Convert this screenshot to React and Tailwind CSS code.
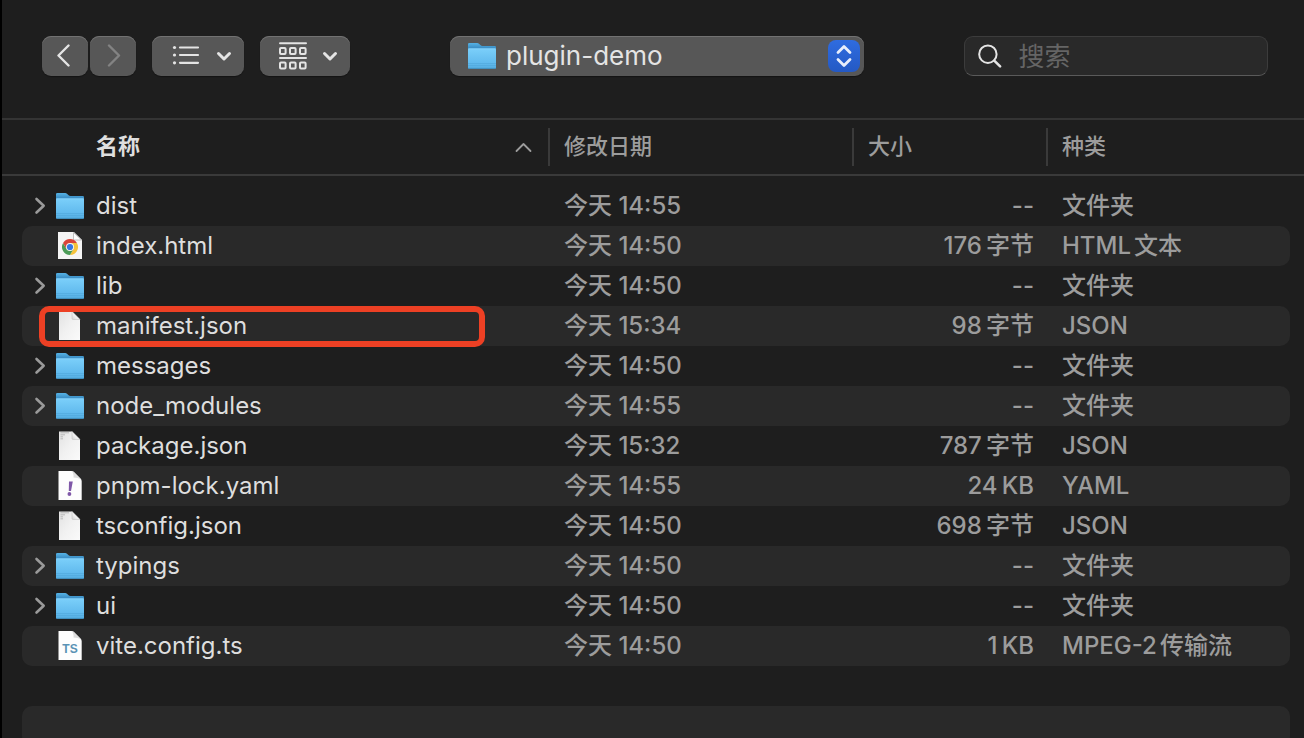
import { useState } from "react";

const files = [
  { name: "dist", icon: "folder", date: "今天 14:55", size: "--", kind: "文件夹" },
  { name: "index.html", icon: "chrome", date: "今天 14:50", size: "176\u2009字节", kind: "HTML文本" },
  { name: "lib", icon: "folder", date: "今天 14:50", size: "--", kind: "文件夹" },
  { name: "manifest.json", icon: "doc", date: "今天 15:34", size: "98\u2009字节", kind: "JSON", marked: true },
  { name: "messages", icon: "folder", date: "今天 14:50", size: "--", kind: "文件夹" },
  { name: "node_modules", icon: "folder", date: "今天 14:55", size: "--", kind: "文件夹" },
  { name: "package.json", icon: "docText", date: "今天 15:32", size: "787\u2009字节", kind: "JSON" },
  { name: "pnpm-lock.yaml", icon: "yaml", date: "今天 14:55", size: "24\u2009KB", kind: "YAML" },
  { name: "tsconfig.json", icon: "docText", date: "今天 14:50", size: "698\u2009字节", kind: "JSON" },
  { name: "typings", icon: "folder", date: "今天 14:50", size: "--", kind: "文件夹" },
  { name: "ui", icon: "folder", date: "今天 14:50", size: "--", kind: "文件夹" },
  { name: "vite.config.ts", icon: "ts", date: "今天 14:50", size: "1\u2009KB", kind: "MPEG-2传输流" },
];

function Gradients() {
  return (
    <svg width="0" height="0" className="absolute" aria-hidden="true">
      <defs>
        <linearGradient id="folderBack" x1="0" y1="0" x2="0" y2="1">
          <stop offset="0" stopColor="#56b2e4" />
          <stop offset="0.25" stopColor="#3c8fc6" />
          <stop offset="1" stopColor="#3c8fc6" />
        </linearGradient>
        <linearGradient id="folderFront" x1="0" y1="0" x2="0" y2="1">
          <stop offset="0" stopColor="#7bcffa" />
          <stop offset="0.7" stopColor="#62bbee" />
          <stop offset="1" stopColor="#55aee2" />
        </linearGradient>
        <linearGradient id="paper" x1="0" y1="0" x2="1" y2="1">
          <stop offset="0" stopColor="#e2e2e2" />
          <stop offset="0.5" stopColor="#f1f1f1" />
          <stop offset="1" stopColor="#fafafa" />
        </linearGradient>
        <linearGradient id="fold" x1="1" y1="0" x2="0" y2="1">
          <stop offset="0.4" stopColor="#ffffff" />
          <stop offset="1" stopColor="#d2d2d2" />
        </linearGradient>
      </defs>
    </svg>
  );
}

function Folder() {
  return (
    <svg width="28" height="28" viewBox="0 0 28 28" aria-hidden="true">
      <path d="M0 2.2Q0 1 1.2 1H9.2Q10.2 1 11 1.7L12.6 3.2Q13.3 4 14.4 4H26.8Q28 4 28 5.2V20H0Z" fill="url(#folderBack)" />
      <path d="M0 7.2Q0 6.4 0.9 6.4H27.1Q28 6.4 28 7.2V25.6Q28 26.8 26.8 26.8H1.2Q0 26.8 0 25.6Z" fill="url(#folderFront)" />
      <path d="M0.4 6.9H27.6" stroke="#8ad6fb" strokeWidth="0.8" />
      <path d="M0 21.5H28M0 23.5H28" stroke="#4fa6da" strokeWidth="0.6" />
      <path d="M0.3 26.4H27.7" stroke="#3f8fc0" strokeWidth="0.9" />
    </svg>
  );
}

function Chrome() {
  return (
    <svg width="28" height="28" viewBox="0 0 28 28" aria-hidden="true">
      <path d="M2 0H18L26 8V27H2Z" fill="#f4f4f4" />
      <path d="M17.5 0.5V8H25.5Z" fill="#fdfdfd" stroke="#b4b4b4" strokeWidth="0.8" />
      <g transform="translate(0 -0.5)">
        <path d="M14 11.5H20.93A8 8 0 0 1 14 23.5L17.46 17.5Z" fill="#f5c33b" />
        <path d="M17.46 17.5L14 23.5A8 8 0 0 1 7.07 11.5L10.54 17.5Z" fill="#4b9b57" />
        <path d="M10.54 17.5L7.07 11.5A8 8 0 0 1 20.93 11.5H14Z" fill="#d8453a" />
        <circle cx="14" cy="15.5" r="4" fill="#f4f4f4" />
        <circle cx="14" cy="15.5" r="3.1" fill="#3577e4" />
      </g>
    </svg>
  );
}

function Doc({ lines }) {
  return (
    <svg width="28" height="30" viewBox="0 1 28 30" aria-hidden="true">
      <path d="M3 1.5H16L24 9.5V30H3Z" fill="url(#paper)" />
      {lines && <path d="M4.5 2.8H13M4.5 4.8H9M4.5 6.8H7M4.5 8.8H7" stroke="#b4b4b4" strokeWidth="0.9" />}
      <path d="M16 1.5V8.5Q16 9.5 17 9.5H24Z" fill="url(#fold)" stroke="#c4c4c4" strokeWidth="0.6" />
    </svg>
  );
}

function Labeled({ children }) {
  return (
    <svg width="28" height="30" viewBox="0 1 28 30" aria-hidden="true">
      <path d="M2.5 1H15.5Q17 1 18 2L25 9Q25.7 10 25.7 11.5V30H2.5Z" fill="#fdfdfd" />
      <path d="M15.5 1Q18 3 17.5 7.5Q22 7.5 25 9.5L17.5 1.8Z" fill="#dcdcdc" />
      {children}
    </svg>
  );
}

function FileIcon({ type }) {
  if (type === "folder") return <Folder />;
  if (type === "chrome") return <Chrome />;
  if (type === "doc") return <Doc />;
  if (type === "docText") return <Doc lines />;
  if (type === "yaml")
    return (
      <Labeled>
        <path d="M13 11.5H16.8L15 21H12.8Z" fill="#7f57a8" />
        <circle cx="13.4" cy="24" r="1.9" fill="#7f57a8" />
      </Labeled>
    );
  return (
    <Labeled>
      <text x="14" y="22.5" textAnchor="middle" fontSize="12" fontWeight="700" fill="#5a93b5" fontFamily="'Liberation Sans', sans-serif">
        TS
      </text>
    </Labeled>
  );
}

const toolButton =
  "flex h-10 items-center rounded-[9px] bg-[#575757] text-[#e4e4e4] shadow-[inset_0_1px_0_#727272,0_1px_1px_rgba(0,0,0,0.35)]";

function DownChevron() {
  return (
    <svg width="16" height="12" viewBox="0 0 16 12" fill="none" stroke="currentColor" strokeWidth="3" strokeLinecap="round" strokeLinejoin="round" aria-hidden="true">
      <path d="M2.5 3.5L8 9L13.5 3.5" />
    </svg>
  );
}

function Toolbar() {
  const [query, setQuery] = useState("");
  return (
    <header className="flex h-[118px] shrink-0 items-center justify-between gap-4 pr-9 pb-1.5 pl-10">
      <div className="flex gap-4">
        <div className="flex gap-0.5">
          <button type="button" aria-label="后退" className={`${toolButton} w-[46px] justify-center`}>
            <svg width="16" height="24" viewBox="0 0 16 24" fill="none" stroke="currentColor" strokeWidth="2.4" strokeLinecap="round" strokeLinejoin="round" aria-hidden="true">
              <path d="M11.5 1.5L1.5 11.5L11.5 21.5" />
            </svg>
          </button>
          <button type="button" aria-label="前进" className={`${toolButton} w-[46px] justify-center`}>
            <svg width="16" height="24" viewBox="0 0 16 24" fill="none" stroke="#838383" strokeWidth="2.4" strokeLinecap="round" strokeLinejoin="round" aria-hidden="true">
              <path d="M4 1.5L14 11.5L4 21.5" />
            </svg>
          </button>
        </div>
        <button type="button" aria-label="列表显示" className={`${toolButton} w-[92px] justify-between pr-3 pl-5`}>
          <svg width="28" height="22" viewBox="0 0 28 22" aria-hidden="true">
            <g fill="currentColor">
              <circle cx="2.5" cy="2.5" r="1.6" />
              <circle cx="2.5" cy="10" r="1.6" />
              <circle cx="2.5" cy="17.8" r="1.6" />
            </g>
            <path d="M8 2.5H26M8 10H26M8 17.8H26" stroke="currentColor" strokeWidth="2.2" strokeLinecap="round" />
          </svg>
          <DownChevron />
        </button>
        <button type="button" aria-label="分组方式" className={`${toolButton} w-[90px] justify-between pr-3 pl-[18px]`}>
          <svg width="30" height="30" viewBox="0 0 30 30" fill="none" stroke="currentColor" strokeWidth="2" strokeLinecap="round" aria-hidden="true">
            <path d="M2 2.2H28M2 17H28" />
            <rect x="2" y="7" width="5.6" height="6" rx="1" />
            <rect x="12" y="7" width="5.6" height="6" rx="1" />
            <rect x="22" y="7" width="5.6" height="6" rx="1" />
            <rect x="2" y="21.5" width="5.6" height="6" rx="1" />
            <rect x="12" y="21.5" width="5.6" height="6" rx="1" />
            <rect x="22" y="21.5" width="5.6" height="6" rx="1" />
          </svg>
          <DownChevron />
        </button>
      </div>

      <div className="relative w-[414px]">
        <select
          aria-label="当前文件夹"
          className={`${toolButton} w-full appearance-none pr-12 pl-14 text-[26px] leading-8`}
        >
          <option>plugin-demo</option>
        </select>
        <span className="pointer-events-none absolute inset-y-0 left-[18px] flex items-center">
          <Folder />
        </span>
        <span className="pointer-events-none absolute top-1 right-1 flex h-8 w-8 items-center justify-center rounded-lg bg-linear-to-b from-[#2f6ce0] to-[#2459c4]">
          <svg width="18" height="24" viewBox="0 0 18 24" fill="none" stroke="#e8eefb" strokeWidth="2.8" strokeLinecap="round" strokeLinejoin="round" aria-hidden="true">
            <path d="M3 8.5L9 2.5L15 8.5M3 15.5L9 21.5L15 15.5" />
          </svg>
        </span>
      </div>

      <label className="flex h-10 w-[304px] items-center rounded-[9px] border border-[#3c3c3c] border-b-[#5a5a5a] bg-[#292929] pl-3">
        <svg width="28" height="28" viewBox="0 0 28 28" fill="none" stroke="#e4e4e4" strokeLinecap="round" aria-hidden="true">
          <circle cx="12" cy="12" r="9.6" strokeWidth="2.2" />
          <path d="M19 19L25.5 25.5" strokeWidth="2.8" />
        </svg>
        <input
          type="search"
          aria-label="搜索"
          placeholder="搜索"
          value={query}
          onChange={(e) => setQuery(e.target.value)}
          className="w-full min-w-0 bg-transparent pt-0.5 pl-4 text-[26px] leading-8 text-[#dedede] outline-none placeholder:text-[#656565]"
        />
      </label>
    </header>
  );
}

const headLine = "border-t-2 border-b-2 border-t-[#343434] border-b-[#3a3a3a] p-0 text-left font-normal";
const headCell = "flex h-[38px] items-center border-l-2 border-[#3a3a3a] pl-3.5 font-medium";

function FileTable() {
  return (
    <table className="w-full table-fixed border-separate border-spacing-0 whitespace-nowrap text-2xl text-[#9c9c9c]">
      <colgroup>
        <col className="w-5" />
        <col />
        <col className="w-[304px]" />
        <col className="w-[194px]" />
        <col className="w-[244px]" />
        <col className="w-3.5" />
      </colgroup>
      <thead className="text-[22px]">
        <tr className="h-[58px]">
          <td className={headLine} />
          <th scope="col" aria-sort="ascending" className={headLine}>
            <button type="button" className="flex h-[38px] w-full items-center justify-between pr-4 pl-[74px] font-bold text-[#dedede]">
              名称
              <svg width="18" height="12" viewBox="0 0 18 12" fill="none" stroke="#9c9c9c" strokeWidth="1.8" strokeLinecap="round" strokeLinejoin="round" aria-hidden="true">
                <path d="M2.5 10L9.5 3L16.5 10" />
              </svg>
            </button>
          </th>
          <th scope="col" className={headLine}>
            <div className={headCell}>修改日期</div>
          </th>
          <th scope="col" className={headLine}>
            <div className={headCell}>大小</div>
          </th>
          <th scope="col" className={headLine}>
            <div className={headCell}>种类</div>
          </th>
          <td className={headLine} />
        </tr>
      </thead>
      <tbody>
        <tr className="h-2.5" aria-hidden="true">
          <td colSpan={6} className="p-0" />
        </tr>
        {files.map((f, i) => {
          const bg = i % 2 ? "bg-[#292929]" : "";
          return (
            <tr key={f.name} className="h-10">
              <td className="p-0" />
              <td className={`relative rounded-l-[10px] p-0 ${bg}`}>
                <div className="flex h-10 items-center pl-3">
                  {f.icon === "folder" ? (
                    <button type="button" aria-label={`展开 ${f.name}`} className="flex w-3 justify-center">
                      <svg width="12" height="18" viewBox="0 0 12 18" fill="none" stroke="#9a9a9a" strokeWidth="2.6" strokeLinecap="round" strokeLinejoin="round" aria-hidden="true">
                        <path d="M2.5 2L9.7 8.7L2.5 15.5" />
                      </svg>
                    </button>
                  ) : (
                    <span className="w-3" />
                  )}
                  <span className="mr-3 ml-2.5 flex w-7 shrink-0">
                    <FileIcon type={f.icon} />
                  </span>
                  <span className="leading-8 text-[#dedede]">{f.name}</span>
                </div>
                {f.marked && (
                  <span className="pointer-events-none absolute top-0 right-[63px] -bottom-px left-[17px] rounded-[10px] border-6 border-[#ed4024]" />
                )}
              </td>
              <td className={`p-0 pl-4 font-medium ${bg}`}>{f.date}</td>
              <td className={`p-0 pr-3 text-right font-medium ${bg}`}>{f.size}</td>
              <td className={`rounded-r-[10px] p-0 pl-4 font-medium [text-autospace:normal] ${bg}`}>{f.kind}</td>
              <td className="p-0" />
            </tr>
          );
        })}
      </tbody>
    </table>
  );
}

export default function App() {
  return (
    <main
      lang="zh-CN"
      className="flex h-screen flex-col overflow-hidden border-l-2 border-black bg-[#1e1e1e] font-['Inter','Noto_Sans_CJK_SC',sans-serif]"
    >
      <Gradients />
      <Toolbar />
      <FileTable />
      <div className="mt-10 mr-3.5 ml-5 h-10 shrink-0 rounded-[10px] bg-[#292929]" />
    </main>
  );
}
